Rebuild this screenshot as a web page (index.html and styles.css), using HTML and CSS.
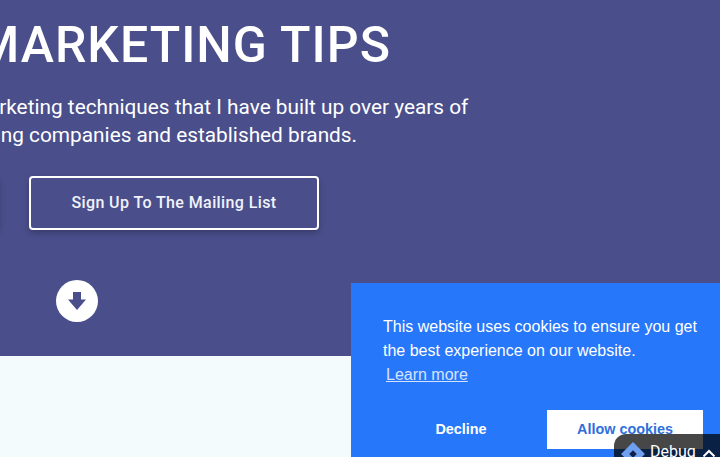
FILE: index.html
```html
<!DOCTYPE html>
<html lang="en">
<head>
<meta charset="utf-8">
<title>Marketing Tips</title>
<link rel="stylesheet" href="styles.css">
</head>
<body>
<section class="hero">
  <div class="hero-inner">
    <h1 class="title">TOP MARKETING TIPS</h1>
    <p class="lead">Learn the marketing techniques that I have built up over years of<br>coaching young companies and established brands.</p>
    <div class="actions">
      <a class="btn btn-first">Read The Tips Now</a>
      <a class="btn">Sign Up To The Mailing List</a>
    </div>
    <a class="scroll-down" aria-label="Scroll down">
      <svg viewBox="0 0 20 20" width="20" height="20"><path d="M6 1h8v7.500h5L10 19 1 8.500h5z"/></svg>
    </a>
  </div>
</section>
<section class="below"></section>
<aside class="cookie">
  <p class="cookie-msg">This website uses cookies to ensure you get the best experience on our website. <a class="cookie-link">Learn more</a></p>
  <div class="cookie-actions">
    <a class="cookie-btn cookie-decline">Decline</a>
    <a class="cookie-btn cookie-allow">Allow cookies</a>
  </div>
</aside>
<div class="debug">
  <svg class="debug-logo" viewBox="0 0 24 24" width="26" height="26"><path class="d1" d="M12 1l11 11-11 11L1 12z"/><path class="d2" d="M12 8.500l3.500 3.500-3.500 3.500L8.500 12z"/></svg>
  <span>Debug</span>
  <svg class="debug-chev" viewBox="0 0 14 9" width="14" height="9"><path d="M1.500 7.500L7 2l5.500 5.500"/></svg>
</div>
</body>
</html>
```
FILE: styles.css
```css
html, body { margin: 0; height: 100%; overflow: hidden; }
body { width: 720px; height: 457px; position: relative; background: #f4fbfd; font-family: Roboto, sans-serif; }
.hero { background: #4a4f8c; height: 356px; overflow: hidden; }
.hero-inner { margin-left: -173px; width: 800px; padding-top: 16px; color: #fff; }
.title { margin: 0 0 0 36px; font-size: 50px; line-height: 58px; font-weight: 500; letter-spacing: 1px; white-space: nowrap; }
.lead { margin: 19px 0 0 51px; font-size: 20.8px; line-height: 28px; white-space: nowrap; }
.actions { display: flex; gap: 30px; margin-top: 27px; }
.btn { box-sizing: border-box; width: 290px; height: 54px; display: flex; align-items: center; justify-content: center; padding-bottom: 2px; border: 2px solid #fff; border-radius: 4px; font-size: 16px; font-weight: 500; letter-spacing: .4px; color: #f1f2fa; box-shadow: 0 3px 6px rgba(0,0,0,.25); }
.btn-first { width: 172px; }
.scroll-down { display: flex; align-items: center; justify-content: center; width: 42px; height: 42px; border-radius: 50%; background: #fff; margin: 50px 0 0 229px; }
.scroll-down svg { fill: #4a4f8c; }
.cookie { position: absolute; right: 0; bottom: 0; box-sizing: border-box; width: 369px; height: 174px; background: #2777fb; color: #fff; padding: 32px 17px 8px 32px; font-family: "Liberation Sans", Arial, sans-serif; font-size: 16px; line-height: 24px; }
.cookie-msg { margin: 0 0 23px; width: 320px; }
.cookie-link { display: inline-block; padding: 0 3px; color: #fff; opacity: .8; text-decoration: underline; }
.cookie-actions { display: flex; gap: 8px; }
.cookie-btn { width: 156px; height: 39px; display: flex; align-items: center; justify-content: center; font-size: 14.4px; font-weight: 700; padding-bottom: 1px; box-sizing: border-box; }
.cookie-allow { background: #fff; color: #2f6fdc; }
.debug { position: absolute; left: 614px; top: 434px; width: 106px; height: 23px; box-sizing: border-box; border-radius: 12px 0 0 0; background: rgba(0,0,0,.72); color: #fff; display: flex; align-items: flex-start; gap: 4px; padding: 7px 0 0 6px; font-family: Roboto, sans-serif; font-size: 16px; line-height: 22px; overflow: hidden; }
.d1 { fill: #6f9ff0; }
.d2 { fill: #10204a; }
.debug-chev { fill: none; stroke: #fff; stroke-width: 2; flex: none; margin: 8px 0 0 2px; }
```
